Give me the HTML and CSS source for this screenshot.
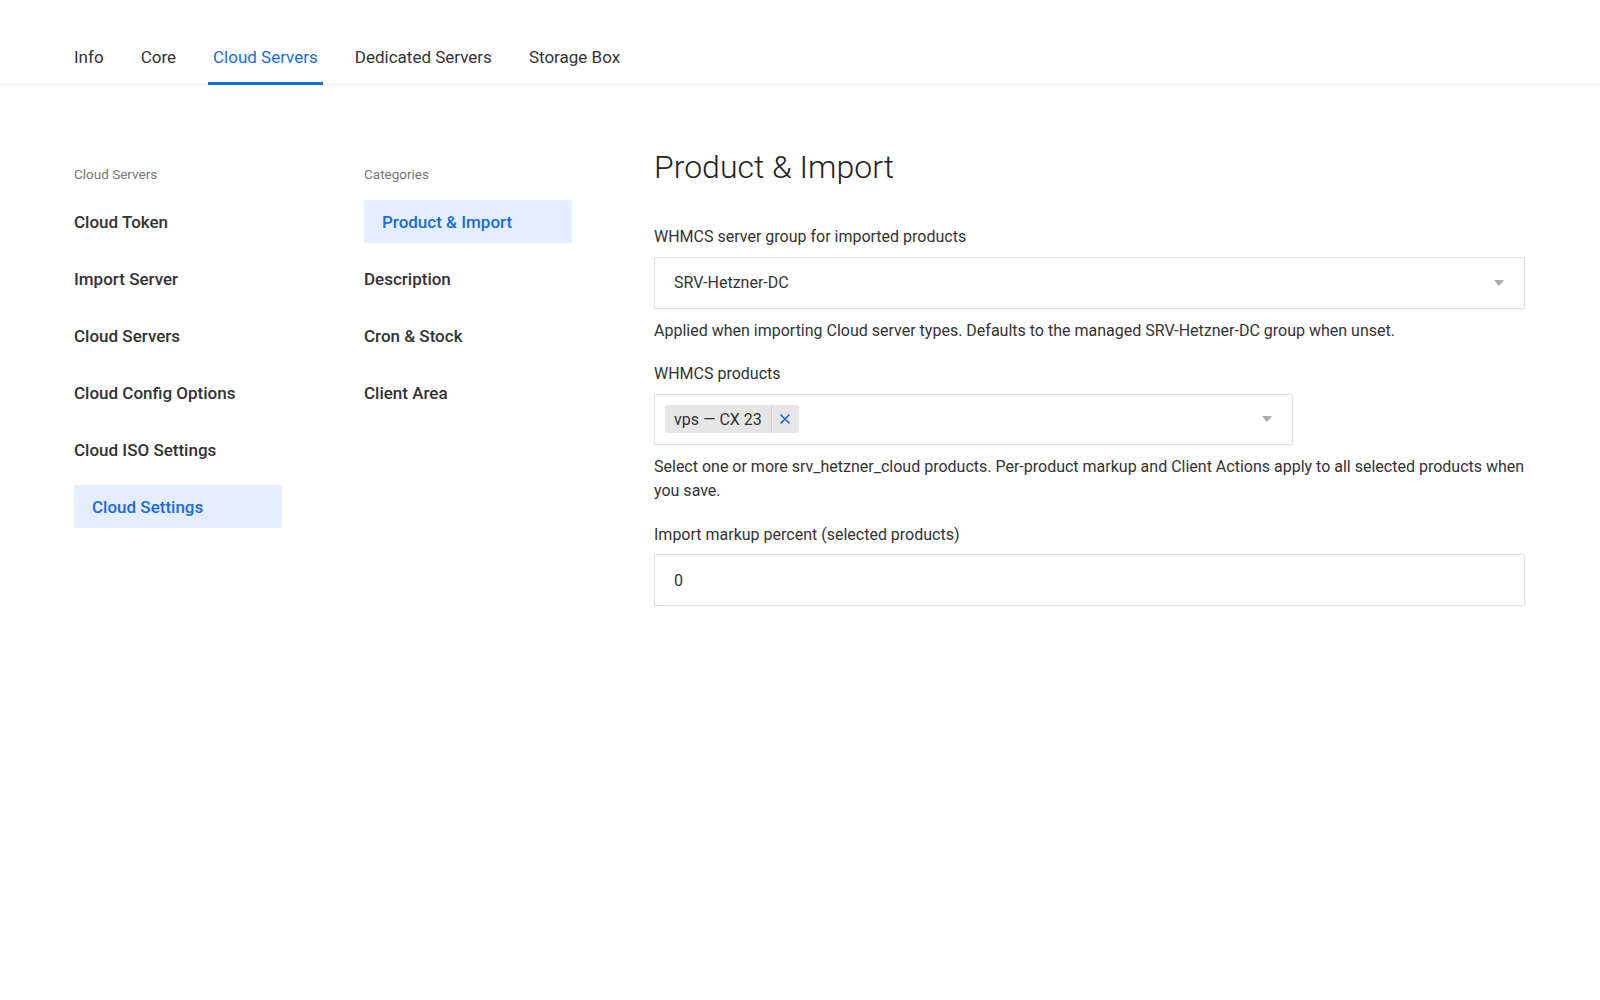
FILE: index.html
```html
<!DOCTYPE html>
<html lang="en">
<head>
  <meta charset="UTF-8" />
  <meta name="viewport" content="width=device-width, initial-scale=1.0"/>
  <title>Settings - Cloud Servers</title>
  <link rel="stylesheet" href="styles.css">
</head>
<body>
  <nav class="tabs">
    <a class="tab" href="#">Info</a>
    <a class="tab" href="#">Core</a>
    <a class="tab active" href="#">Cloud Servers</a>
    <a class="tab" href="#">Dedicated Servers</a>
    <a class="tab" href="#">Storage Box</a>
  </nav>

  <main class="layout">
    <aside class="side">
      <div class="side-title">Cloud Servers</div>
      <a class="side-item" href="#">Cloud Token</a>
      <a class="side-item" href="#">Import Server</a>
      <a class="side-item" href="#">Cloud Servers</a>
      <a class="side-item" href="#">Cloud Config Options</a>
      <a class="side-item" href="#">Cloud ISO Settings</a>
      <a class="side-item active" href="#">Cloud Settings</a>
    </aside>

    <aside class="side">
      <div class="side-title">Categories</div>
      <a class="side-item active" href="#">Product &amp; Import</a>
      <a class="side-item" href="#">Description</a>
      <a class="side-item" href="#">Cron &amp; Stock</a>
      <a class="side-item" href="#">Client Area</a>
    </aside>

    <section class="content">
      <h1>Product &amp; Import</h1>

      <div class="field">
        <label>WHMCS server group for imported products</label>
        <div class="select">
          <span>SRV-Hetzner-DC</span>
          <span class="caret"></span>
        </div>
        <p class="help">Applied when importing Cloud server types. Defaults to the managed SRV-Hetzner-DC group when unset.</p>
      </div>

      <div class="field">
        <label>WHMCS products</label>
        <div class="select multi">
          <span class="chip">
            <span class="chip-text">vps — CX 23</span>
            <span class="chip-x">
              <svg width="12" height="12" viewBox="0 0 12 12"><path d="M1.5 1.5 L10.5 10.5 M10.5 1.5 L1.5 10.5" stroke="#1a6be0" stroke-width="1.6" fill="none"/></svg>
            </span>
          </span>
          <span class="caret"></span>
        </div>
        <p class="help">Select one or more srv_hetzner_cloud products. Per-product markup and Client Actions apply to all selected products when you save.</p>
      </div>

      <div class="field">
        <label>Import markup percent (selected products)</label>
        <input class="input" type="text" value="0">
      </div>
    </section>
  </main>
</body>
</html>
```

FILE: styles.css
```css
* { box-sizing: border-box; }
body {
  margin: 0;
  font-family: Roboto, "Liberation Sans", Arial, sans-serif;
  color: #333;
  background: #fff;
}
a { text-decoration: none; }

.tabs {
  display: flex;
  gap: 27px;
  padding: 30px 0 0 69px;
  border-bottom: 1px solid #ebebeb;
}
.tab {
  padding: 15px 5px 13px;
  font-size: 17px;
  line-height: 24px;
  color: #333;
  border-bottom: 3px solid transparent;
  margin-bottom: -1px;
}
.tab.active {
  color: #1a6be0;
  border-bottom-color: #1a6be0;
}

.layout {
  display: grid;
  grid-template-columns: 290px 290px 1fr;
  padding: 62px 75px 0 74px;
}
.side {
  padding-top: 18px;
  display: flex;
  flex-direction: column;
  align-items: flex-start;
  gap: 14px;
}
.side-title {
  font-size: 13.5px;
  line-height: 18px;
  color: #777;
  margin-bottom: 3px;
}
.side-item {
  width: 208px;
  height: 43px;
  display: flex;
  align-items: center;
  font-size: 17px;
  font-weight: 500;
  color: #333;
}
.side-item.active {
  background: #e4eefc;
  color: #1a6be0;
  padding-left: 18px;
  border-radius: 2px;
}

.content h1 {
  margin: 0 0 38px;
  font-size: 32px;
  line-height: 40px;
  font-weight: 300;
  color: #222;
}
.field { margin-bottom: 19px; }
.field label {
  display: block;
  font-size: 16px;
  line-height: 24px;
  color: #333;
  margin-bottom: 7.5px;
}
.select, .input {
  display: flex;
  align-items: center;
  justify-content: space-between;
  width: 100%;
  height: 52px;
  padding: 0 19px;
  border: 1px solid #e0e0e0;
  border-radius: 2px;
  box-shadow: 0 1px 1px rgba(0, 0, 0, 0.04);
  font-family: inherit;
  font-size: 16px;
  color: #333;
  background: #fff;
}
.select.multi {
  width: 639px;
  height: 51px;
  padding-left: 10px;
}
.caret {
  width: 0;
  height: 0;
  margin-right: 1px;
  border-left: 5px solid transparent;
  border-right: 5px solid transparent;
  border-top: 6px solid #aaa;
}
.chip {
  display: flex;
  align-items: stretch;
  height: 28px;
  background: #e6e6e6;
  border-radius: 3px;
  font-size: 16px;
}
.chip-text {
  display: flex;
  align-items: center;
  padding: 0 9px;
  border-right: 1px solid #d4d4d4;
}
.chip-x {
  display: flex;
  align-items: center;
  justify-content: center;
  width: 27px;
}
.help {
  margin: 10px 0 0;
  font-size: 16px;
  line-height: 24.5px;
  color: #333;
}
.input { outline: none; }
```
